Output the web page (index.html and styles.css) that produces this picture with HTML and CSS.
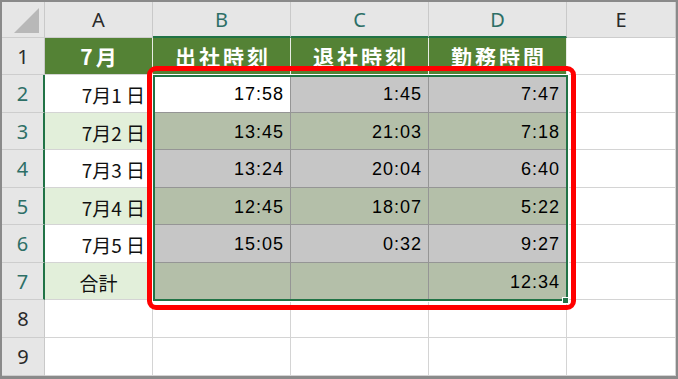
FILE: index.html
```html
<!DOCTYPE html>
<html lang="ja">
<head>
<meta charset="utf-8">
<link rel="stylesheet" href="styles.css">
</head>
<body>
<div class="frame">
  <div class="sheet">
    <div class="hd corner"><svg class="tri" width="26" height="26" viewBox="0 0 26 26"><polygon points="25,0 25,25 0,25" fill="#b8b8b8"/></svg></div>
    <div class="hd col">A</div>
    <div class="hd col sel">B</div>
    <div class="hd col sel">C</div>
    <div class="hd col sel">D</div>
    <div class="hd col">E</div>

    <div class="hd row">1</div>
    <div class="c th">7月</div>
    <div class="c th">出社時刻</div>
    <div class="c th">退社時刻</div>
    <div class="c th">勤務時間</div>
    <div class="c"></div>

    <div class="hd row sel">2</div>
    <div class="c a w">7月1 日</div>
    <div class="c n active">17:58</div>
    <div class="c n sg">1:45</div>
    <div class="c n sg">7:47</div>
    <div class="c"></div>

    <div class="hd row sel">3</div>
    <div class="c a g">7月2 日</div>
    <div class="c n sl">13:45</div>
    <div class="c n sl">21:03</div>
    <div class="c n sl">7:18</div>
    <div class="c"></div>

    <div class="hd row sel">4</div>
    <div class="c a w">7月3 日</div>
    <div class="c n sg">13:24</div>
    <div class="c n sg">20:04</div>
    <div class="c n sg">6:40</div>
    <div class="c"></div>

    <div class="hd row sel">5</div>
    <div class="c a g">7月4 日</div>
    <div class="c n sl">12:45</div>
    <div class="c n sl">18:07</div>
    <div class="c n sl">5:22</div>
    <div class="c"></div>

    <div class="hd row sel">6</div>
    <div class="c a w">7月5 日</div>
    <div class="c n sg">15:05</div>
    <div class="c n sg">0:32</div>
    <div class="c n sg">9:27</div>
    <div class="c"></div>

    <div class="hd row sel">7</div>
    <div class="c a g center">合計</div>
    <div class="c n sl"></div>
    <div class="c n sl"></div>
    <div class="c n sl">12:34</div>
    <div class="c"></div>

    <div class="hd row">8</div>
    <div class="c"></div><div class="c"></div><div class="c"></div><div class="c"></div><div class="c"></div>

    <div class="hd row">9</div>
    <div class="c"></div><div class="c"></div><div class="c"></div><div class="c"></div><div class="c"></div>
  </div>
  <div class="redbox"></div>
  <div class="selbox"></div>
  <div class="handle"></div>
</div>
</body>
</html>
```

FILE: styles.css
```css
html, body {
  margin: 0;
  padding: 0;
  background: #ffffff;
}

.frame {
  position: relative;
  width: 678px;
  height: 379px;
  box-sizing: border-box;
  border: 2px solid #8a8a8a;
  border-bottom-width: 3px;
  overflow: hidden;
}

.sheet {
  display: grid;
  grid-template-columns: 43px 108px 138px 138px 138px 109px;
  grid-template-rows: 36px 37px 38px 37px 38px 37px 38px 37px 38px 38px;
  font-family: "Noto Sans CJK JP", sans-serif;
}

.hd {
  box-sizing: border-box;
  background: #e6e6e6;
  border-right: 1px solid #c9c9c9;
  border-bottom: 1px solid #cdcdcd;
  display: flex;
  align-items: center;
  justify-content: center;
  font-family: "Noto Sans", "Liberation Sans", sans-serif;
  font-size: 20px;
  color: #2a2a2a;
}

.corner {
  position: relative;
  align-items: flex-end;
  justify-content: flex-end;
  padding: 0 4px 3px 0;
}

.tri {
  display: block;
}

.col.sel {
  color: #2d6f66;
  border-bottom: 2px solid #217346;
}

.row.sel {
  color: #2d6f66;
  border-right: 2px solid #217346;
}

.c {
  box-sizing: border-box;
  border-right: 1px solid #d4d4d4;
  border-bottom: 1px solid #d4d4d4;
  display: flex;
  align-items: center;
  justify-content: flex-end;
  padding: 2px 7px 0 4px;
  font-size: 19px;
  color: #111;
  background: #ffffff;
  white-space: nowrap;
}

.th {
  background: #548235;
  color: #ffffff;
  font-weight: 700;
  font-size: 21px;
  letter-spacing: 3px;
  justify-content: center;
  padding: 0 0 0 3px;
  border-right: 1px solid #e8ece4;
  border-bottom: 1px solid #d4d4d4;
}

.a.w { background: #ffffff; }
.a.g { background: #e2efda; }
.center { justify-content: center; padding: 2px 0 0 0; }

.n {
  font-family: "Liberation Sans", sans-serif;
  font-weight: 400;
  font-size: 18px;
  letter-spacing: 1px;
  padding-right: 6px;
  color: #000;
  border-right: 1px solid #959595;
  border-bottom: 1px solid #959595;
}

.active { background: #ffffff; }
.sg { background: #c6c6c6; }
.sl { background: #b4bfa9; }

.redbox {
  position: absolute;
  left: 145px;
  top: 64px;
  width: 429px;
  height: 244px;
  box-sizing: border-box;
  border: 5px solid #ff0000;
  border-radius: 9px;
}

.selbox {
  position: absolute;
  left: 151px;
  top: 73px;
  width: 415px;
  height: 226px;
  box-sizing: border-box;
  border: 2px solid #217346;
  box-shadow: 0 0 0 1px #ffffff;
}

.handle {
  position: absolute;
  left: 560px;
  top: 295px;
  width: 7px;
  height: 7px;
  box-sizing: border-box;
  background: #217346;
  border: 1px solid #ffffff;
}
```
